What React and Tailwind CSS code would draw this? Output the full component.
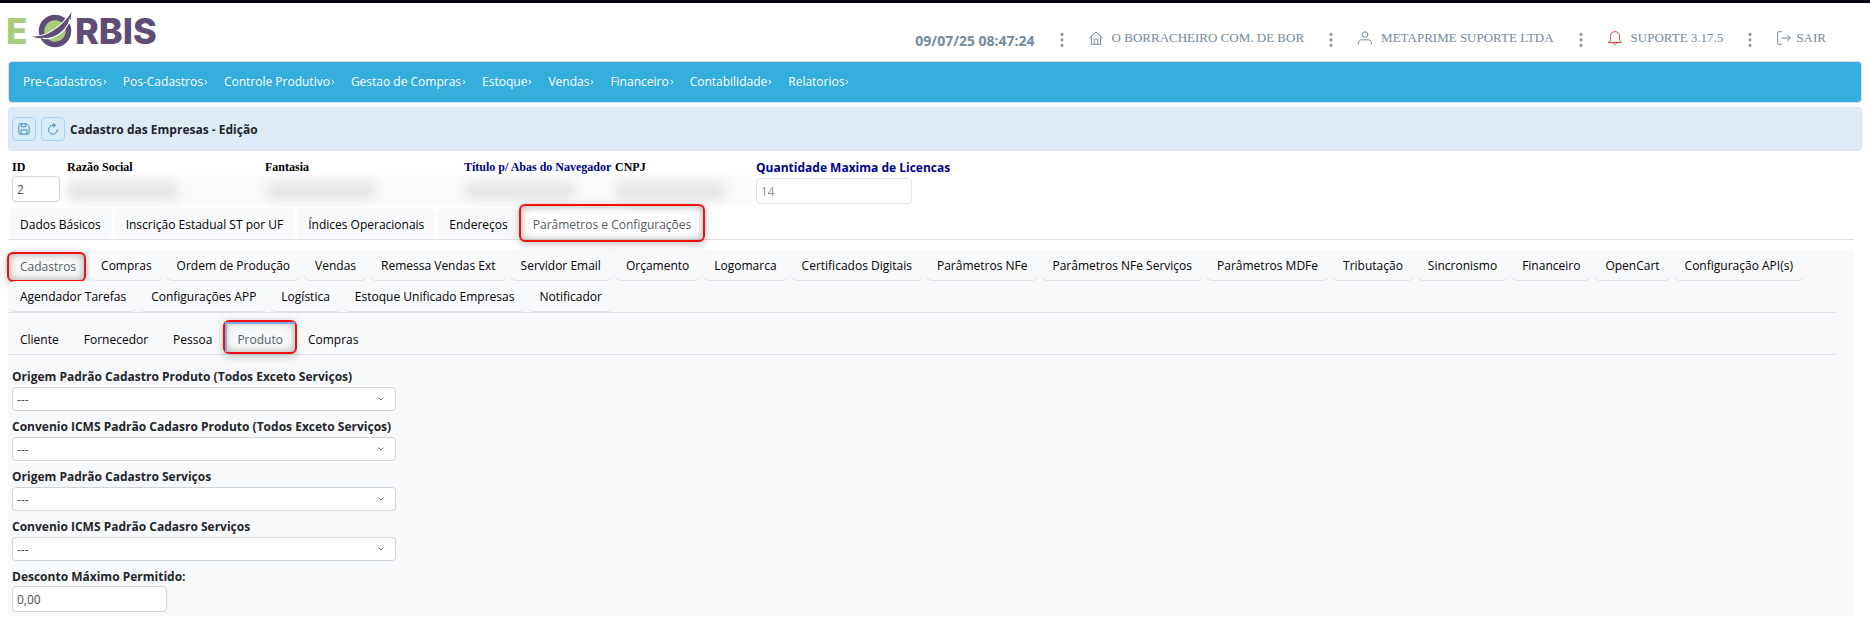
const navItems = ['Pre-Cadastros', 'Pos-Cadastros', 'Controle Produtivo', 'Gestao de Compras', 'Estoque', 'Vendas', 'Financeiro', 'Contabilidade', 'Relatorios'];
const mainTabs = ['Dados Básicos', 'Inscrição Estadual ST por UF', 'Índices Operacionais', 'Endereços', 'Parâmetros e Configurações'];
const configTabs = ['Cadastros', 'Compras', 'Ordem de Produção', 'Vendas', 'Remessa Vendas Ext', 'Servidor Email', 'Orçamento', 'Logomarca', 'Certificados Digitais', 'Parâmetros NFe', 'Parâmetros NFe Serviços', 'Parâmetros MDFe', 'Tributação', 'Sincronismo', 'Financeiro', 'OpenCart', 'Configuração API(s)', 'Agendador Tarefas', 'Configurações APP', 'Logística', 'Estoque Unificado Empresas', 'Notificador'];
const cadastroTabs = ['Cliente', 'Fornecedor', 'Pessoa', 'Produto', 'Compras'];
const selects = [
  ['origem-produto', 'Origem Padrão Cadastro Produto (Todos Exceto Serviços)'],
  ['convenio-produto', 'Convenio ICMS Padrão Cadasro Produto (Todos Exceto Serviços)'],
  ['origem-servicos', 'Origem Padrão Cadastro Serviços'],
  ['convenio-servicos', 'Convenio ICMS Padrão Cadasro Serviços'],
];

function Icon({ children, className = 'size-[14px]' }) {
  return (
    <svg viewBox="0 0 14 14" className={className} fill="none" stroke="currentColor" strokeWidth="1" strokeLinecap="round" strokeLinejoin="round" aria-hidden="true">
      {children}
    </svg>
  );
}

const HomeIcon = () => (
  <Icon>
    <path d="M.6 6.700 7 1.200l6.400 5.500M2.300 5.500v7.800h9.400V5.500M5.200 13V8h3.600v5" />
  </Icon>
);
const UserIcon = () => (
  <Icon>
    <circle cx="7" cy="3.600" r="2.800" />
    <path d="M.6 12.800V12c0-2 1.500-3.200 3.300-3.200h6.200c1.800 0 3.300 1.200 3.300 3.200v.8" />
  </Icon>
);
const BellIcon = () => (
  <Icon>
    <path d="M.8 11.300c1.300-.6 1.700-1.500 1.700-3V5.400C2.500 2.600 4.300.6 7 .6s4.500 2 4.500 4.800v2.900c0 1.500.4 2.400 1.700 3zM5.300 11.500c0 1.200.7 1.900 1.700 1.900s1.700-.7 1.700-1.900" />
  </Icon>
);
const ExitIcon = () => (
  <Icon>
    <path d="M4.700.7H2C1.100.7.6 1.200.6 2v10c0 .8.5 1.300 1.400 1.300h2.700M4.600 7h8.600M10.400 4.200 13.200 7l-2.800 2.800" />
  </Icon>
);
const Dots = () => (
  <svg viewBox="0 0 14 14" className="mx-5 mt-1 size-[14px]" fill="currentColor" aria-hidden="true">
    <circle cx="7" cy="1.500" r="1.400" />
    <circle cx="7" cy="7" r="1.400" />
    <circle cx="7" cy="12.500" r="1.400" />
  </svg>
);

function Logo() {
  return (
    <svg viewBox="-4 -8 170 56" className="h-14 w-[170px] shrink-0" role="img" aria-label="E Orbis">
      <text x="-2" y="33" fontFamily="Inter, sans-serif" fontWeight="800" fontSize="35" fill="#a9cb7b">E</text>
      <circle cx="47" cy="20" r="13.500" fill="#a9cb7b" stroke="#5f4d76" strokeWidth="5.500" />
      <path d="M30 25.200C41 23 53 16 63.500.5 62 20 46 31 30 26.500z" fill="#5f4d76" stroke="#fff" strokeWidth="1.200" />
      <path d="M24 25.600c4 0 7-.3 10-1l1 3c-4 0-8-.8-11-2z" fill="#5f4d76" />
      <path d="M63.500.5 61 6l1.500 3z" fill="#5f4d76" />
      <text x="67" y="33" fontFamily="Inter, sans-serif" fontWeight="800" fontSize="36" fill="#5f4d76">RBIS</text>
    </svg>
  );
}

const highlight = 'pointer-events-none absolute rounded-md border-2 border-[#ee1010] shadow-[0_2px_8px_#00000040,inset_0_0_8px_#00000055]';

function Tabs({ label, items, active, mark, underline, focused }) {
  return (
    <div role="tablist" aria-label={label} className="flex flex-wrap gap-x-[3px] border-b border-[#dee2e6] pl-px">
      {items.map((item) => (
        <button
          key={item}
          role="tab"
          aria-selected={item === active}
          className={`relative h-[31px] rounded-md px-[11px] pt-[2px] text-[12px] font-medium ${underline && item !== active ? 'border-b border-[#dee2e6]' : ''} ${item === active ? 'text-[#555b62]' : 'bg-[#f8f9fb] text-black'}`}
        >
          {item}
          {item === active && <span className={`${highlight} ${mark}`}>{focused && <span className="absolute inset-0 border-t-2 border-l-2 border-[#7eaee0]" />}</span>}
        </button>
      ))}
    </div>
  );
}

const serifLabel = 'block font-["Liberation_Serif",serif] text-[12px] leading-4 font-bold';
const inputStyle = 'block h-[26px] rounded border border-[#ced4da] bg-white px-1 text-[12px] text-[#495057]';

function HiddenField({ id, label, className, color = 'text-black' }) {
  return (
    <div className={className}>
      <label htmlFor={id} className={`${serifLabel} whitespace-nowrap ${color}`}>{label}</label>
      <div className="relative h-[31px] bg-[#fbfbfb]">
        <input id={id} readOnly className="size-full bg-transparent" />
        <span className="pointer-events-none absolute top-2 left-0 h-4 w-28 rounded-full bg-[#e2e3e5] blur-[6px]" />
      </div>
    </div>
  );
}

export default function App() {
  return (
    <div className='border-t-[3px] border-[#06000f] bg-white font-["Open_Sans",sans-serif] text-[12px] text-[#212529]'>
      <header className="flex h-[58px] items-start justify-between pr-11 pl-1">
        <Logo />
        <div className='mt-[22px] flex items-center font-["Liberation_Serif",serif] text-[13px] leading-5 whitespace-nowrap text-[#748a9d]'>
          <time className='mt-[6px] font-["Open_Sans",sans-serif] text-[14px] font-bold'>09/07/25 08:47:24</time>
          <Dots />
          <a href="#empresa" className="flex items-center gap-[9px]"><HomeIcon />O BORRACHEIRO COM. DE BOR</a>
          <Dots />
          <a href="#usuario" className="flex items-center gap-[9px]"><UserIcon />METAPRIME SUPORTE LTDA</a>
          <Dots />
          <a href="#suporte" className="flex items-center gap-[9px]"><span className="text-[#d9434e]"><BellIcon /></span>SUPORTE 3.17.5</a>
          <Dots />
          <a href="#sair" className="flex items-center gap-[5px]"><ExitIcon />SAIR</a>
        </div>
      </header>

      <nav className="mx-2 flex h-[42px] items-center gap-4 rounded border border-[#dee2e6] bg-[#33aedd] px-[14px] text-white">
        {navItems.map((item) => (
          <button key={item} className="flex items-center">
            {item}
            <svg viewBox="0 0 4 6" className="ml-px h-[6px] w-1" fill="none" stroke="currentColor" aria-hidden="true"><path d="m.8.8 2 2.200-2 2.200" /></svg>
          </button>
        ))}
      </nav>

      <div className="mx-2 mt-1 flex h-11 items-center rounded border border-[#dee2e6] bg-[#deebf7] px-[3px]">
        <button aria-label="Salvar" className="mr-[5px] grid size-6 place-items-center rounded border border-[#a9d0ee] bg-[#d7eaf8] text-[#2a7fb8]">
          <Icon className="size-3"><path d="M1 2.200C1 1.400 1.400 1 2.200 1h7.600L13 4.200v7.600c0 .8-.4 1.200-1.200 1.200H2.200C1.400 13 1 12.600 1 11.800zM3.600 13V8h6.800v5M4 1v3.400h5V1" /></Icon>
        </button>
        <button aria-label="Atualizar" className="mr-[5px] grid size-6 place-items-center rounded border border-[#a9d0ee] bg-[#d7eaf8] text-[#2a7fb8]">
          <Icon className="size-3"><path d="M7 2.600a5.200 5.200 0 1 0 5.200 5.200M7 2.600h2.500M7.300.4l2.400 2.200-2.400 2.300" /></Icon>
        </button>
        <h1 className="pt-[2px] font-bold">Cadastro das Empresas - Edição</h1>
      </div>

      <main className="pr-4 pl-2">
        <div className="flex items-start pt-2 pl-1">
          <div className="w-[52px]">
            <label htmlFor="id" className={`${serifLabel} mb-px text-black`}>ID</label>
            <input id="id" defaultValue="2" className={`${inputStyle} w-12`} />
          </div>
          <HiddenField id="razao" label="Razão Social" className="w-[201px] pl-[3px]" />
          <HiddenField id="fantasia" label="Fantasia" className="w-[199px]" />
          <HiddenField id="titulo" label="Título p/ Abas do Navegador" color="text-[#00008b]" className="w-[151px]" />
          <HiddenField id="cnpj" label="CNPJ" className="w-[136px]" />
          <div className="pl-[5px]">
            <label htmlFor="licencas" className="mb-px block leading-[18px] font-bold text-[#00008b]">Quantidade Maxima de Licencas</label>
            <input id="licencas" disabled defaultValue="14" className={`${inputStyle} w-[156px] opacity-60`} />
          </div>
        </div>

        <div className="mt-[2px]">
          <Tabs label="Empresa" items={mainTabs} active="Parâmetros e Configurações" mark="-inset-x-[3px] -top-[4px] -bottom-[3px]" />
        </div>

        <section className="mt-[10px] rounded bg-[#f8f9fb] pr-[18px] pb-1">
          <Tabs label="Configurações" items={configTabs} active="Cadastros" mark="-left-[2px] right-px top-[2px] -bottom-px" underline />
          <div className="mt-[10px]">
            <Tabs label="Cadastros" items={cadastroTabs} active="Produto" mark="-inset-x-[3px] -top-[3px] bottom-0" focused />
          </div>
          <form className="pt-[13px] pl-1">
            {selects.map(([id, label]) => (
              <div key={id} className="mb-[7px]">
                <label htmlFor={id} className="block pb-px leading-[18px] font-bold">{label}</label>
                <div className="relative w-96">
                  <select id={id} className="block h-6 w-full appearance-none rounded border border-[#ced4da] bg-white px-1 pt-[2px] text-[12px] text-[#495057]">
                    <option>---</option>
                  </select>
                  <svg viewBox="0 0 6 4" className="pointer-events-none absolute top-[10px] right-3 h-1 w-[6px]" fill="none" stroke="#6c757d" aria-hidden="true"><path d="m.6.6 2.400 2.400L5.400.6" /></svg>
                </div>
              </div>
            ))}
            <label htmlFor="desconto" className="block leading-[18px] font-bold">Desconto Máximo Permitido:</label>
            <input id="desconto" defaultValue="0,00" className={`${inputStyle} w-[155px]`} />
          </form>
        </section>
      </main>
    </div>
  );
}
